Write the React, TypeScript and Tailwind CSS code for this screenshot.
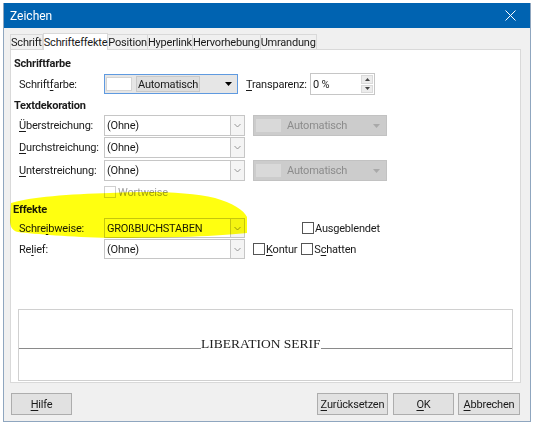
import React from "react";

const U = ({ children }: { children: React.ReactNode }) => (
  <span className="underline underline-offset-[2px] decoration-[1px]">{children}</span>
);

const Chevron = ({ color = "#8a8a8a" }: { color?: string }) => (
  <svg width="7" height="5" viewBox="0 0 7 5">
    <polyline points="0.5,1 3.5,4 6.5,1" fill="none" stroke={color} strokeWidth="0.9" />
  </svg>
);

const Tri = ({ color = "#000" }: { color?: string }) => (
  <svg width="7" height="4" viewBox="0 0 7 4">
    <polygon points="0,0 7,0 3.5,4" fill={color} />
  </svg>
);

const Combo = ({ text, h = "h-[21px]" }: { text: string; h?: string }) => (
  <div className={`flex ${h}`}>
    <div className="w-[127px] border border-[#c6c6c6] bg-white flex items-center pl-[2px] text-[#1a1a1a]">{text}</div>
    <div className="w-[14px] border border-l-0 border-[#c6c6c6] bg-[#f4f4f4] flex items-center justify-center">
      <Chevron />
    </div>
  </div>
);

const DisabledColor = () => (
  <div className="ml-[8px] w-[134px] h-[21px] bg-[#cccccc] border border-[#c2c2c2] flex items-center pl-[2px] pr-[6px]">
    <div className="w-[25px] h-[13px] bg-[#d9d9d9]" />
    <div className="ml-[6px] text-[#8c8c8c] flex-1">Automatisch</div>
    <Tri color="#a9a9a9" />
  </div>
);

const Box = ({ disabled = false }: { disabled?: boolean }) => (
  <div className={`w-[12px] h-[12px] border ${disabled ? "border-[#cfcfcf]" : "border-[#555]"} bg-white`} />
);

const Label = ({ children }: { children: React.ReactNode }) => (
  <div className="ml-[8px] w-[85px] text-[#1a1a1a]">{children}</div>
);

const Btn = ({ children, w }: { children: React.ReactNode; w: string }) => (
  <div className={`${w} h-[22px] bg-[#e1e1e1] border border-[#adadad] flex items-center justify-center text-[#1a1a1a]`}>
    {children}
  </div>
);

export default function App() {
  const tabs = ["Schrift", "Schrifteffekte", "Position", "Hyperlink", "Hervorhebung", "Umrandung"];
  return (
    <div className="relative w-[533px] h-[424px] bg-white pt-[3px] pl-[3px] font-['Roboto',sans-serif] text-[11px] tracking-[-0.2px] leading-none overflow-hidden">
      <div className="w-[528px] h-[419px] border border-[#8fa6bf] border-t-0 bg-[#f0f0f0] flex flex-col">
        {/* title bar */}
        <div className="h-[25px] bg-[#0063b1] flex items-center pl-[6px] pr-[14px] text-white text-[12px] tracking-normal">
          <div className="flex-1">Zeichen</div>
          <svg width="11" height="11" viewBox="0 0 11 11">
            <path d="M0.5 0.5 L10.5 10.5 M10.5 0.5 L0.5 10.5" stroke="#fff" strokeWidth="1" />
          </svg>
        </div>
        <div className="flex flex-col pl-[6px] pr-[9px]">
          {/* tabs */}
          <div className="mt-[5px] h-[16px] flex items-end">
            {tabs.map((t) =>
              t === "Schrifteffekte" ? (
                <div key={t} className="relative z-10 h-[17px] -mb-px bg-white border border-b-0 border-[#d9d9d9] flex items-center text-[#1a1a1a]">
                  {t}
                </div>
              ) : (
                <div key={t} className="h-[15px] border border-b-0 border-l-0 first:border-l border-[#d9d9d9] flex items-center text-[#1a1a1a]">
                  {t}
                </div>
              )
            )}
          </div>
          {/* panel */}
          <div className="h-[334px] bg-white border border-[#d9d9d9] flex flex-col">
            <div className="mt-[6px] ml-[3px] h-[15px] flex items-center font-bold text-[#1a1a1a]">Schriftfarbe</div>
            <div className="mt-[2px] h-[22px] flex items-center">
              <Label>
                Schrift<U>f</U>arbe:
              </Label>
              <div className="w-[134px] h-[20px] border border-[#5f9ae0] bg-[#e6e6e6] flex items-center pl-[1px] pr-[5px]">
                <div className="w-[26px] h-[14px] bg-white border border-[#d4d4d4]" />
                <div className="ml-[4px] h-[16px] px-[1px] border border-[#c9c9c9] bg-[#dedede] flex items-center text-[#1a1a1a]">
                  Automatisch
                </div>
                <div className="flex-1" />
                <Tri />
              </div>
              <div className="ml-[8px] w-[64px] text-[#1a1a1a]">
                <U>T</U>ransparenz:
              </div>
              <div className="w-[65px] h-[22px] border border-[#c6c6c6] bg-white flex">
                <div className="flex-1 flex items-center pl-[2px] text-[#1a1a1a]">0 %</div>
                <div className="w-[13px] flex flex-col gap-[1px] py-[1px] pr-[1px]">
                  <div className="flex-1 bg-[#ececec] border border-[#dadada] flex items-center justify-center">
                    <svg width="5" height="3" viewBox="0 0 5 3"><polygon points="0,3 5,3 2.5,0" fill="#444" /></svg>
                  </div>
                  <div className="flex-1 bg-[#ececec] border border-[#dadada] flex items-center justify-center">
                    <svg width="5" height="3" viewBox="0 0 5 3"><polygon points="0,0 5,0 2.5,3" fill="#444" /></svg>
                  </div>
                </div>
              </div>
            </div>
            <div className="mt-[2px] ml-[3px] h-[16px] flex items-center font-bold text-[#1a1a1a]">Textdekoration</div>
            <div className="mt-[2px] flex items-center">
              <Label>
                <U>Ü</U>berstreichung:
              </Label>
              <Combo text="(Ohne)" />
              <DisabledColor />
            </div>
            <div className="mt-[1px] flex items-center">
              <Label>
                <U>D</U>urchstreichung:
              </Label>
              <Combo text="(Ohne)" />
            </div>
            <div className="mt-[2px] flex items-center">
              <Label>
                <U>U</U>nterstreichung:
              </Label>
              <Combo text="(Ohne)" />
              <DisabledColor />
            </div>
            <div className="mt-[4px] h-[14px] flex items-center ml-[93px]">
              <Box disabled />
              <span className="ml-[2px] text-[#a0a0a0]">Wortweise</span>
            </div>
            <div className="mt-[2px] ml-[2px] h-[16px] flex items-center font-bold text-[#1a1a1a]">Effekte</div>
            <div className="mt-[1px] h-[20px] flex items-center">
              <Label>
                Schre<U>i</U>bweise:
              </Label>
              <Combo text="GROßBUCHSTABEN" h="h-[20px]" />
              <div className="ml-[57px] flex items-center">
                <Box />
                <span className="ml-[1px] text-[#1a1a1a]">Ausgeblendet</span>
              </div>
            </div>
            <div className="mt-[1px] h-[20px] flex items-center">
              <Label>
                Re<U>l</U>ief:
              </Label>
              <Combo text="(Ohne)" h="h-[20px]" />
              <div className="ml-[8px] flex items-center">
                <Box />
                <span className="ml-[1px] text-[#1a1a1a]">
                  <U>K</U>ontur
                </span>
              </div>
              <div className="ml-[4px] flex items-center">
                <Box />
                <span className="ml-[1px] text-[#1a1a1a]">
                  S<U>c</U>hatten
                </span>
              </div>
            </div>
            <div className="mt-[50px] mx-[7px] h-[72px] border border-[#d0d0d0] bg-white flex flex-col">
              <div className="h-[39px] flex items-end">
                <div className="w-[182px] border-b border-[#8a8a8a]" />
                <div className="font-['Liberation_Serif',serif] text-[13.5px] tracking-normal leading-none text-[#222] -mb-[1px]">LIBERATION SERIF</div>
                <div className="flex-1 border-b border-[#8a8a8a]" />
              </div>
            </div>
          </div>
          {/* buttons */}
          <div className="mt-[10px] flex items-center pl-[1px] pr-[1px]">
            <Btn w="w-[61px]">
              <U>H</U>ilfe
            </Btn>
            <div className="flex-1" />
            <Btn w="w-[71px]">
              <U>Z</U>urücksetzen
            </Btn>
            <div className="w-[5px]" />
            <Btn w="w-[61px]">
              <U>O</U>K
            </Btn>
            <div className="w-[4px]" />
            <Btn w="w-[62px]">
              <U>A</U>bbrechen
            </Btn>
          </div>
        </div>
      </div>
      {/* yellow highlighter stroke */}
      <svg className="absolute left-0 top-0 pointer-events-none mix-blend-multiply" width="533" height="424" viewBox="0 0 533 424">
        <path
          d="M11 203 C 30 197, 70 194, 110 193 C 150 191, 190 192, 215 198 C 232 203, 244 210, 247 217 L 247 233 C 220 236, 170 238, 110 238 C 70 237, 35 234, 18 232 C 12 231, 10 226, 10 220 Z"
          fill="#ffff10"
        />
      </svg>
    </div>
  );
}
